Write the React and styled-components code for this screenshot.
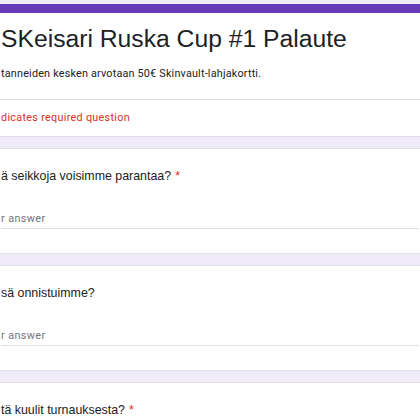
import React from "react";
import styled, { createGlobalStyle } from "styled-components";

const GlobalStyle = createGlobalStyle`
  html, body {
    margin: 0;
    padding: 0;
    background: #f0ebf8;
    overflow: hidden;
  }
`;

const questions = [
  { title: "ä seikkoja voisimme parantaa?", required: true },
  { title: "sä onnistuimme?", required: false },
  { title: "tä kuulit turnauksesta?", required: true },
];

const App = () => {
  return (
    <>
      <GlobalStyle />
      <Page>
        <HeaderCard>
          <Title>SKeisari Ruska Cup #1 Palaute</Title>
          <Description>
            tanneiden kesken arvotaan 50€ Skinvault-lahjakortti.
          </Description>
          <Required>dicates required question</Required>
        </HeaderCard>
        {questions.map((q) => (
          <Card key={q.title}>
            <Question>
              {q.title}
              {q.required && <Star>*</Star>}
            </Question>
            <Answer>r answer</Answer>
          </Card>
        ))}
      </Page>
    </>
  );
};

const Page = styled.div`
  display: flex;
  flex-direction: column;
  gap: 11px;
  padding-top: 4px;
  margin: 0 -12px;
`;

const CardBase = styled.div`
  background: #fff;
  border: 1px solid #e3dfea;
  border-radius: 8px;
  padding: 0 12px;
`;

const HeaderCard = styled(CardBase)`
  border-top: 9px solid #673ab7;
  border-radius: 0;
  padding-top: 11px;
  padding-bottom: 10px;
`;

const Title = styled.div`
  font-family: "Liberation Sans", Arial, sans-serif;
  font-size: 24.7px;
  line-height: 30px;
  color: #202124;
`;

const Description = styled.div`
  margin-top: 12px;
  padding-bottom: 17px;
  border-bottom: 1px solid #dadce0;
  margin-left: -12px;
  padding-left: 12px;
  margin-right: -12px;
  font-family: Roboto, "Liberation Sans", sans-serif;
  font-size: 10.8px;
  line-height: 16px;
  letter-spacing: 0.2px;
  color: #202124;
`;

const Required = styled.div`
  margin-top: 10px;
  font-family: Roboto, "Liberation Sans", sans-serif;
  font-size: 10.8px;
  line-height: 16px;
  letter-spacing: 0.3px;
  color: #d93025;
`;

const Card = styled(CardBase)`
  padding-top: 18px;
  padding-bottom: 24px;
`;

const Question = styled.div`
  font-family: "Liberation Sans", Arial, sans-serif;
  font-size: 12.4px;
  line-height: 18px;
  color: #202124;
`;

const Star = styled.span`
  color: #d93025;
  margin-left: 4px;
`;

const Answer = styled.div`
  margin-top: 26px;
  padding-bottom: 1px;
  border-bottom: 1px solid #e0e0e0;
  font-family: Roboto, "Liberation Sans", sans-serif;
  font-size: 10.8px;
  line-height: 16px;
  letter-spacing: 0.4px;
  color: #70757a;
`;

export default App;
